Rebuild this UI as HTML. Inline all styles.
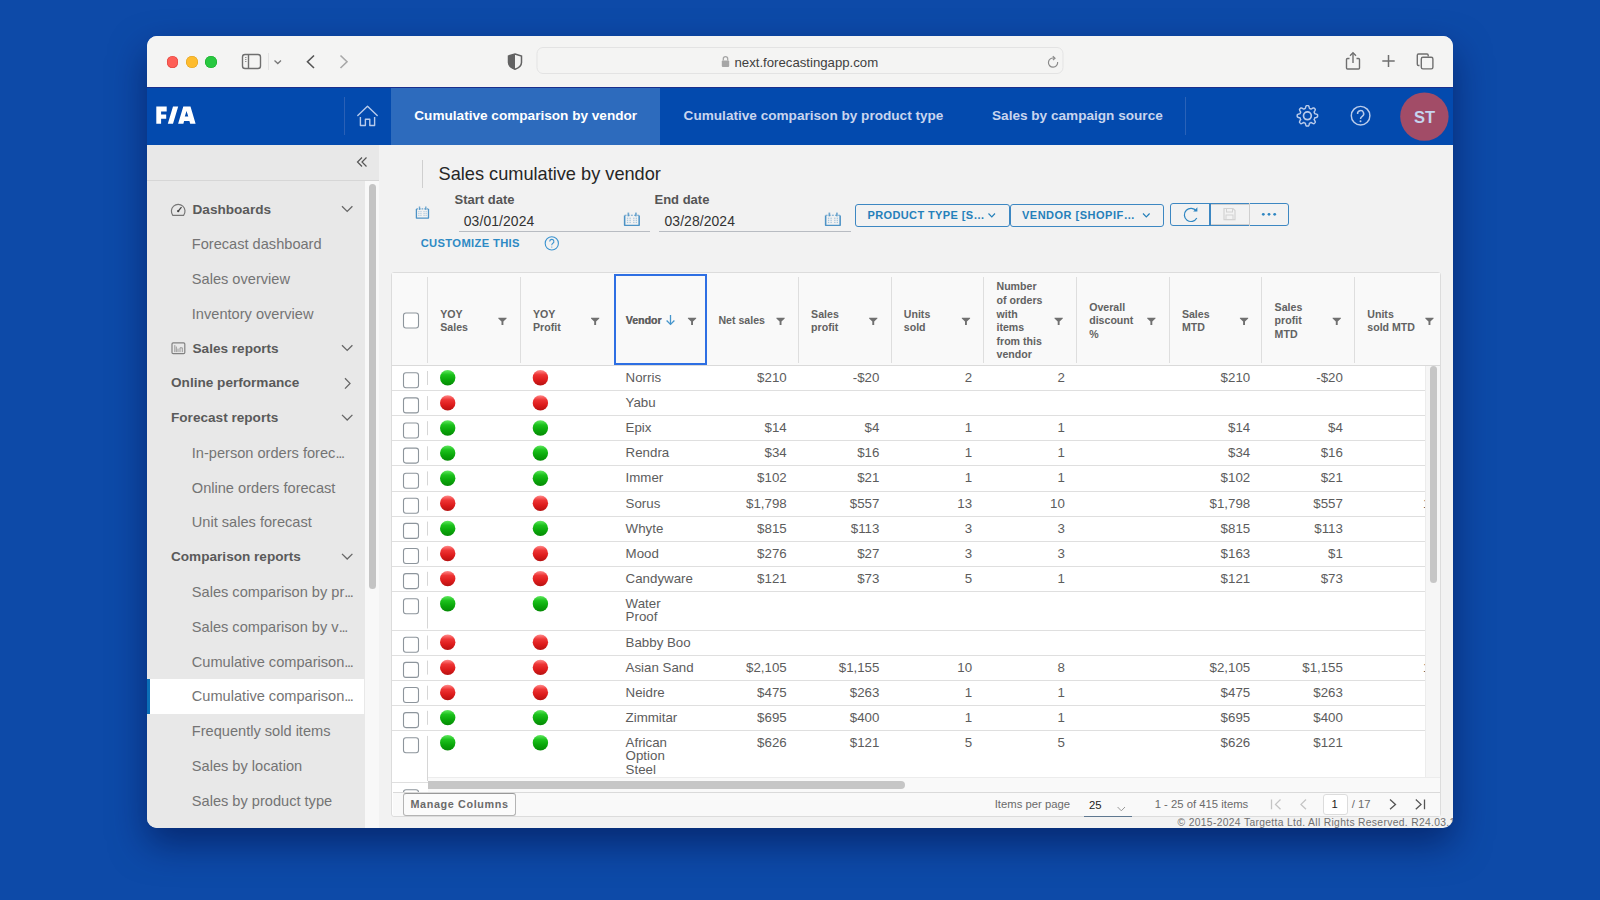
<!DOCTYPE html><html><head><meta charset="utf-8"><style>
*{box-sizing:border-box;margin:0;padding:0}
html,body{width:1600px;height:900px;overflow:hidden}
body{background:#0d4aa8;font-family:"Liberation Sans",sans-serif;position:relative}
#win{position:absolute;left:147px;top:36px;width:1306px;height:792px;border-radius:10px;overflow:hidden;box-shadow:0 16px 36px rgba(0,15,70,0.55);background:#f2f2f2}
#pg{position:absolute;left:-147px;top:-36px;width:1600px;height:900px}
.a{position:absolute}
.t{position:absolute;white-space:nowrap}
svg{position:absolute;overflow:visible}
</style></head><body>
<div id="win"><div id="pg">
<div class="a" style="left:147px;top:36px;width:1306px;height:51px;background:#f4f4f3"></div>
<div class="a" style="left:166.7px;top:56.0px;width:11.6px;height:11.6px;border-radius:50%;background:#fe5f57;box-shadow:inset 0 0 0 0.6px #e0443e"></div>
<div class="a" style="left:186.0px;top:56.0px;width:11.6px;height:11.6px;border-radius:50%;background:#febc2e;box-shadow:inset 0 0 0 0.6px #dea123"></div>
<div class="a" style="left:205.2px;top:56.0px;width:11.6px;height:11.6px;border-radius:50%;background:#28c840;box-shadow:inset 0 0 0 0.6px #1aab29"></div>
<svg style="left:0;top:0" width="1600" height="100"><rect x="242.5" y="54.5" width="18" height="14" rx="2.5" fill="none" stroke="#6f6f6f" stroke-width="1.4"/><line x1="248.5" y1="54.5" x2="248.5" y2="68.5" stroke="#6f6f6f" stroke-width="1.4"/><line x1="245" y1="57.5" x2="246.5" y2="57.5" stroke="#8a8a8a" stroke-width="0.9"/><line x1="245" y1="59.5" x2="246.5" y2="59.5" stroke="#8a8a8a" stroke-width="0.9"/><line x1="245" y1="61.5" x2="246.5" y2="61.5" stroke="#8a8a8a" stroke-width="0.9"/><line x1="268.5" y1="53" x2="268.5" y2="70" stroke="#e2e2e2" stroke-width="1"/><polyline points="274.5,60.5 277.8,63.5 281,60.5" fill="none" stroke="#777" stroke-width="1.3"/><polyline points="314,55.5 307.5,61.8 314,68" fill="none" stroke="#555" stroke-width="1.6"/><polyline points="340.5,55.5 347,61.8 340.5,68" fill="none" stroke="#a8a8a8" stroke-width="1.6"/><path d="M515,54 L521.5,56 L521.5,62.5 C521.5,66 518.5,68 515,69.3 C511.5,68 508.5,66 508.5,62.5 L508.5,56 Z" fill="none" stroke="#636363" stroke-width="1.5"/><path d="M515,54 L508.5,56 L508.5,62.5 C508.5,66 511.5,68 515,69.3 Z" fill="#636363"/><rect x="537" y="47.5" width="526" height="26" rx="6" fill="#f4f4f3" stroke="#e3e3e3" stroke-width="1"/><rect x="721.8" y="60.5" width="7.4" height="6.5" rx="1" fill="#a6a6a6"/><path d="M723.3,60.5 V58.8 A2.2,2.2 0 0 1 727.7,58.8 V60.5" fill="none" stroke="#a6a6a6" stroke-width="1.3"/><path d="M1057.6,62 A4.6,4.6 0 1 1 1054,58.1" fill="none" stroke="#8a8a8a" stroke-width="1.2"/><polyline points="1052.8,56.3 1055,58.2 1052.9,60.1" fill="none" stroke="#8a8a8a" stroke-width="1.2"/><path d="M1349.5,58.5 H1347.5 Q1346.5,58.5 1346.5,59.5 V68 Q1346.5,69 1347.5,69 H1358.5 Q1359.5,69 1359.5,68 V59.5 Q1359.5,58.5 1358.5,58.5 H1356.5" fill="none" stroke="#6f6f6f" stroke-width="1.4"/><line x1="1353" y1="53" x2="1353" y2="63" stroke="#6f6f6f" stroke-width="1.4"/><polyline points="1350,55.8 1353,52.8 1356,55.8" fill="none" stroke="#6f6f6f" stroke-width="1.4"/><line x1="1382.3" y1="61" x2="1394.7" y2="61" stroke="#6f6f6f" stroke-width="1.5"/><line x1="1388.5" y1="55" x2="1388.5" y2="67" stroke="#6f6f6f" stroke-width="1.5"/><path d="M1419.5,65.5 H1418.5 Q1417.3,65.5 1417.3,64.3 V55.2 Q1417.3,54 1418.5,54 H1427 Q1428.2,54 1428.2,55.2 V56.5" fill="none" stroke="#6f6f6f" stroke-width="1.4"/><rect x="1421.3" y="57.3" width="11.6" height="11.6" rx="1.6" fill="none" stroke="#6f6f6f" stroke-width="1.4"/></svg>
<div class="t" style="left:734.5px;top:54.5px;font-size:13.2px;line-height:16px;color:#404040">next.forecastingapp.com</div>
<div class="a" style="left:147px;top:87px;width:1306px;height:58px;background:#034aae"></div>
<div class="a" style="left:390.5px;top:87px;width:269.5px;height:58px;background:#2d6bbd"></div>
<div class="a" style="left:147px;top:87px;width:1306px;height:1px;background:#1a2f8c"></div>
<svg style="left:0;top:0" width="300" height="150"><path fill="#fff" fill-rule="evenodd" d="M156.3,106.5 H166.7 V111.4 H161.1 V114.5 H166.2 V118.7 H161.1 V123.8 H156.3 Z M173,106.5 H178.2 L173,123.8 H167.8 Z M183.3,106.5 L190.5,106.5 L195.6,123.8 L190.2,123.8 L189.4,121 L184.1,121 L183.4,123.8 L178.1,123.8 Z M186.5,111 L188.3,116.4 L184.8,116.4 Z"/></svg>
<div class="a" style="left:344.2px;top:96.5px;width:1px;height:38px;background:#2a60b6"></div>
<div class="a" style="left:1185px;top:96.5px;width:1px;height:38px;background:#2a62b8"></div>
<svg style="left:0;top:0" width="1600" height="150"><path d="M357.8,115.6 L367.5,106.3 L377.2,115.6" fill="none" stroke="#b9cbeb" stroke-width="1.4" stroke-linecap="round" stroke-linejoin="round"/><path d="M360.4,117 V125.5 H365.4 V119.2 H369.8 V125.5 H374.6 V117" fill="none" stroke="#b9cbeb" stroke-width="1.4" stroke-linejoin="round"/></svg>
<div class="t" style="left:414.3px;top:107px;font-size:13.6px;line-height:18px;font-weight:bold;color:#ffffff">Cumulative comparison by vendor</div>
<div class="t" style="left:683.6px;top:107px;font-size:13.6px;line-height:18px;font-weight:bold;color:#c8d5ee">Cumulative comparison by product type</div>
<div class="t" style="left:992px;top:107px;font-size:13.6px;line-height:18px;font-weight:bold;color:#c8d5ee">Sales by campaign source</div>
<svg style="left:0;top:0" width="1600" height="150"><path d="M1307.40,105.60 L1307.90,105.61 L1308.40,105.65 L1308.83,106.18 L1309.14,107.07 L1309.36,107.97 L1309.61,108.53 L1309.96,108.64 L1310.31,108.78 L1310.65,108.93 L1310.98,109.10 L1311.55,108.88 L1312.34,108.40 L1313.20,107.99 L1313.87,107.92 L1314.25,108.24 L1314.61,108.59 L1314.96,108.95 L1315.28,109.33 L1315.21,110.00 L1314.80,110.86 L1314.32,111.65 L1314.10,112.22 L1314.27,112.55 L1314.42,112.89 L1314.56,113.24 L1314.67,113.59 L1315.23,113.84 L1316.13,114.06 L1317.02,114.37 L1317.55,114.80 L1317.59,115.30 L1317.60,115.80 L1317.59,116.30 L1317.55,116.80 L1317.02,117.23 L1316.13,117.54 L1315.23,117.76 L1314.67,118.01 L1314.56,118.36 L1314.42,118.71 L1314.27,119.05 L1314.10,119.38 L1314.32,119.95 L1314.80,120.74 L1315.21,121.60 L1315.28,122.27 L1314.96,122.65 L1314.61,123.01 L1314.25,123.36 L1313.87,123.68 L1313.20,123.61 L1312.34,123.20 L1311.55,122.72 L1310.98,122.50 L1310.65,122.67 L1310.31,122.82 L1309.96,122.96 L1309.61,123.07 L1309.36,123.63 L1309.14,124.53 L1308.83,125.42 L1308.40,125.95 L1307.90,125.99 L1307.40,126.00 L1306.90,125.99 L1306.40,125.95 L1305.97,125.42 L1305.66,124.53 L1305.44,123.63 L1305.19,123.07 L1304.84,122.96 L1304.49,122.82 L1304.15,122.67 L1303.82,122.50 L1303.25,122.72 L1302.46,123.20 L1301.60,123.61 L1300.93,123.68 L1300.55,123.36 L1300.19,123.01 L1299.84,122.65 L1299.52,122.27 L1299.59,121.60 L1300.00,120.74 L1300.48,119.95 L1300.70,119.38 L1300.53,119.05 L1300.38,118.71 L1300.24,118.36 L1300.13,118.01 L1299.57,117.76 L1298.67,117.54 L1297.78,117.23 L1297.25,116.80 L1297.21,116.30 L1297.20,115.80 L1297.21,115.30 L1297.25,114.80 L1297.78,114.37 L1298.67,114.06 L1299.57,113.84 L1300.13,113.59 L1300.24,113.24 L1300.38,112.89 L1300.53,112.55 L1300.70,112.22 L1300.48,111.65 L1300.00,110.86 L1299.59,110.00 L1299.52,109.33 L1299.84,108.95 L1300.19,108.59 L1300.55,108.24 L1300.93,107.92 L1301.60,107.99 L1302.46,108.40 L1303.25,108.88 L1303.82,109.10 L1304.15,108.93 L1304.49,108.78 L1304.84,108.64 L1305.19,108.53 L1305.44,107.97 L1305.66,107.07 L1305.97,106.18 L1306.40,105.65 L1306.90,105.61 Z" fill="none" stroke="#b9cbeb" stroke-width="1.45" stroke-linejoin="round"/><circle cx="1307.4" cy="115.8" r="3.9" fill="none" stroke="#b9cbeb" stroke-width="1.7"/><circle cx="1360.6" cy="115.7" r="9.3" fill="none" stroke="#b9cbeb" stroke-width="1.45"/><path d="M1357.6,114 A3.05,3.05 0 1 1 1362.2,116.3 C1360.9,117.1 1360.5,117.6 1360.5,118.9" fill="none" stroke="#b9cbeb" stroke-width="1.5"/><circle cx="1360.5" cy="121.3" r="1" fill="#b9cbeb"/><circle cx="1424.4" cy="116.6" r="24.2" fill="#a24c67"/></svg>
<div class="t" style="left:1414px;top:106.5px;font-size:16.5px;line-height:20px;font-weight:bold;color:#c6d5ee">ST</div>
<div class="a" style="left:147px;top:145px;width:218px;height:683px;background:#e8e8e8"></div>
<div class="a" style="left:365px;top:145px;width:13.5px;height:683px;background:#f8f8f8"></div>
<div class="a" style="left:147px;top:145px;width:232px;height:35.5px;background:#e8e8e8;border-bottom:1.5px solid #d6d6d6"></div>
<svg style="left:0;top:0" width="400" height="200"><polyline points="362,157.5 357.5,162 362,166.5" fill="none" stroke="#555" stroke-width="1.2"/><polyline points="366.5,157.5 362,162 366.5,166.5" fill="none" stroke="#555" stroke-width="1.2"/></svg>
<div class="a" style="left:368.5px;top:184px;width:7.5px;height:405px;border-radius:4px;background:#c4c4c4"></div>
<div class="t" style="left:192.5px;top:200.6px;font-size:13.6px;line-height:18px;font-weight:bold;color:#5a5a5a">Dashboards</div>
<div class="t" style="left:191.8px;top:235.4px;font-size:14.6px;line-height:18px;color:#747474">Forecast dashboard</div>
<div class="t" style="left:191.8px;top:270.1px;font-size:14.6px;line-height:18px;color:#747474">Sales overview</div>
<div class="t" style="left:191.8px;top:304.9px;font-size:14.6px;line-height:18px;color:#747474">Inventory overview</div>
<div class="t" style="left:192.5px;top:339.6px;font-size:13.6px;line-height:18px;font-weight:bold;color:#5a5a5a">Sales reports</div>
<div class="t" style="left:171px;top:374.4px;font-size:13.6px;line-height:18px;font-weight:bold;color:#5a5a5a">Online performance</div>
<div class="t" style="left:171px;top:409.2px;font-size:13.6px;line-height:18px;font-weight:bold;color:#5a5a5a">Forecast reports</div>
<div class="t" style="left:191.8px;top:443.9px;font-size:14.6px;line-height:18px;color:#747474">In-person orders forec<span style="letter-spacing:-1.3px">...</span></div>
<div class="t" style="left:191.8px;top:478.7px;font-size:14.6px;line-height:18px;color:#747474">Online orders forecast</div>
<div class="t" style="left:191.8px;top:513.4px;font-size:14.6px;line-height:18px;color:#747474">Unit sales forecast</div>
<div class="t" style="left:171px;top:548.2px;font-size:13.6px;line-height:18px;font-weight:bold;color:#5a5a5a">Comparison reports</div>
<div class="t" style="left:191.8px;top:583.0px;font-size:14.6px;line-height:18px;color:#747474">Sales comparison by pr<span style="letter-spacing:-1.3px">...</span></div>
<div class="t" style="left:191.8px;top:617.7px;font-size:14.6px;line-height:18px;color:#747474">Sales comparison by v<span style="letter-spacing:-1.3px">...</span></div>
<div class="t" style="left:191.8px;top:652.5px;font-size:14.6px;line-height:18px;color:#747474">Cumulative comparison<span style="letter-spacing:-1.3px">...</span></div>
<div class="a" style="left:147px;top:679.0px;width:217px;height:34.5px;background:#fff"></div>
<div class="a" style="left:147px;top:679.0px;width:3px;height:34.5px;background:#0b6fb8"></div>
<div class="t" style="left:191.8px;top:687.2px;font-size:14.6px;line-height:18px;color:#747474">Cumulative comparison<span style="letter-spacing:-1.3px">...</span></div>
<div class="t" style="left:191.8px;top:722.0px;font-size:14.6px;line-height:18px;color:#747474">Frequently sold items</div>
<div class="t" style="left:191.8px;top:756.8px;font-size:14.6px;line-height:18px;color:#747474">Sales by location</div>
<div class="t" style="left:191.8px;top:791.5px;font-size:14.6px;line-height:18px;color:#747474">Sales by product type</div>
<svg style="left:0;top:0" width="400" height="900"><polyline points="342,206.3 347.2,211.4 352.4,206.3" fill="none" stroke="#666" stroke-width="1.3"/><path d="M172.8,215.3 A6.8,6.8 0 1 1 183.6,215.3 Z" fill="none" stroke="#777" stroke-width="1.2"/><line x1="178.2" y1="211.1" x2="181.5" y2="207.1" stroke="#444" stroke-width="1.3"/><circle cx="178.2" cy="211.1" r="1.2" fill="#444"/><polyline points="342,345.3 347.2,350.4 352.4,345.3" fill="none" stroke="#666" stroke-width="1.3"/><rect x="172" y="342.9" width="12.8" height="10.8" rx="1.2" fill="none" stroke="#808080" stroke-width="1.2"/><path d="M174.8,352.1 V345.1 M176.3,352.1 V346.6 M178,352.1 V348.6 M180,352.1 V347.8 H182.3 V352.1" fill="none" stroke="#909090" stroke-width="0.9"/><polyline points="345,378.2 350,383.4 345,388.6" fill="none" stroke="#666" stroke-width="1.3"/><polyline points="342,414.9 347.2,420.0 352.4,414.9" fill="none" stroke="#666" stroke-width="1.3"/><polyline points="342,553.9 347.2,559.0 352.4,553.9" fill="none" stroke="#666" stroke-width="1.3"/></svg>
<div class="a" style="left:421.5px;top:159.5px;width:1.2px;height:28px;background:#cfcfcf"></div>
<div class="t" style="left:438.5px;top:163px;font-size:18.2px;line-height:22px;color:#262626">Sales cumulative by vendor</div>
<div class="t" style="left:454.5px;top:192px;font-size:13px;line-height:15px;font-weight:bold;color:#555">Start date</div>
<div class="t" style="left:654.5px;top:192px;font-size:13px;line-height:15px;font-weight:bold;color:#555">End date</div>
<div class="t" style="left:463.8px;top:212.5px;font-size:13.9px;line-height:16px;color:#333;letter-spacing:0.1px">03/01/2024</div>
<div class="t" style="left:664.5px;top:212.5px;font-size:13.9px;line-height:16px;color:#333;letter-spacing:0.1px">03/28/2024</div>
<div class="a" style="left:458.5px;top:230.5px;width:191.5px;height:1.5px;background:#b8bcc2"></div>
<div class="a" style="left:659px;top:230.5px;width:192px;height:1.5px;background:#b8bcc2"></div>
<svg style="left:0;top:0" width="1600" height="300"><path d="M416.4,209.1 V218.1 H428.5 V209.1" fill="none" stroke="#4d93c6" stroke-width="1.3" stroke-linejoin="round"/><line x1="416.4" y1="208.9" x2="428.5" y2="208.9" stroke="#4d93c6" stroke-width="1.1" stroke-dasharray="1.6,1" opacity="0.8"/><rect x="418.8" y="206.5" width="1.4" height="3.4" fill="#4d93c6" opacity="0.8"/><rect x="425.1" y="206.5" width="1.4" height="3.4" fill="#4d93c6" opacity="0.8"/><rect x="418.3" y="211.1" width="1.1" height="1.1" fill="#4d93c6" opacity="0.45"/><rect x="420.4" y="211.1" width="1.1" height="1.1" fill="#4d93c6" opacity="0.45"/><rect x="423.5" y="211.1" width="1.1" height="1.1" fill="#4d93c6" opacity="0.45"/><rect x="425.6" y="211.1" width="1.1" height="1.1" fill="#4d93c6" opacity="0.45"/><rect x="418.3" y="213.0" width="1.1" height="1.1" fill="#4d93c6" opacity="0.45"/><rect x="420.4" y="213.0" width="1.1" height="1.1" fill="#4d93c6" opacity="0.45"/><rect x="423.5" y="213.0" width="1.1" height="1.1" fill="#4d93c6" opacity="0.45"/><rect x="425.6" y="213.0" width="1.1" height="1.1" fill="#4d93c6" opacity="0.45"/><rect x="418.3" y="214.9" width="1.1" height="1.1" fill="#4d93c6" opacity="0.45"/><rect x="420.4" y="214.9" width="1.1" height="1.1" fill="#4d93c6" opacity="0.45"/><rect x="423.5" y="214.9" width="1.1" height="1.1" fill="#4d93c6" opacity="0.45"/><rect x="425.6" y="214.9" width="1.1" height="1.1" fill="#4d93c6" opacity="0.45"/><g transform="translate(623.8,212.6) scale(1.2,1.1)"><path d="M0.7,2.6 V11.6 H12.8 V2.6" fill="none" stroke="#4d93c6" stroke-width="1.3" stroke-linejoin="round"/><line x1="0.7" y1="2.4" x2="12.8" y2="2.4" stroke="#4d93c6" stroke-width="1.1" stroke-dasharray="1.6,1" opacity="0.8"/><rect x="3.1" y="0.0" width="1.4" height="3.4" fill="#4d93c6" opacity="0.8"/><rect x="9.4" y="0.0" width="1.4" height="3.4" fill="#4d93c6" opacity="0.8"/><rect x="2.6" y="4.6" width="1.1" height="1.1" fill="#4d93c6" opacity="0.45"/><rect x="4.7" y="4.6" width="1.1" height="1.1" fill="#4d93c6" opacity="0.45"/><rect x="7.8" y="4.6" width="1.1" height="1.1" fill="#4d93c6" opacity="0.45"/><rect x="9.9" y="4.6" width="1.1" height="1.1" fill="#4d93c6" opacity="0.45"/><rect x="2.6" y="6.5" width="1.1" height="1.1" fill="#4d93c6" opacity="0.45"/><rect x="4.7" y="6.5" width="1.1" height="1.1" fill="#4d93c6" opacity="0.45"/><rect x="7.8" y="6.5" width="1.1" height="1.1" fill="#4d93c6" opacity="0.45"/><rect x="9.9" y="6.5" width="1.1" height="1.1" fill="#4d93c6" opacity="0.45"/><rect x="2.6" y="8.4" width="1.1" height="1.1" fill="#4d93c6" opacity="0.45"/><rect x="4.7" y="8.4" width="1.1" height="1.1" fill="#4d93c6" opacity="0.45"/><rect x="7.8" y="8.4" width="1.1" height="1.1" fill="#4d93c6" opacity="0.45"/><rect x="9.9" y="8.4" width="1.1" height="1.1" fill="#4d93c6" opacity="0.45"/></g><g transform="translate(824.8,212.6) scale(1.2,1.1)"><path d="M0.7,2.6 V11.6 H12.8 V2.6" fill="none" stroke="#4d93c6" stroke-width="1.3" stroke-linejoin="round"/><line x1="0.7" y1="2.4" x2="12.8" y2="2.4" stroke="#4d93c6" stroke-width="1.1" stroke-dasharray="1.6,1" opacity="0.8"/><rect x="3.1" y="0.0" width="1.4" height="3.4" fill="#4d93c6" opacity="0.8"/><rect x="9.4" y="0.0" width="1.4" height="3.4" fill="#4d93c6" opacity="0.8"/><rect x="2.6" y="4.6" width="1.1" height="1.1" fill="#4d93c6" opacity="0.45"/><rect x="4.7" y="4.6" width="1.1" height="1.1" fill="#4d93c6" opacity="0.45"/><rect x="7.8" y="4.6" width="1.1" height="1.1" fill="#4d93c6" opacity="0.45"/><rect x="9.9" y="4.6" width="1.1" height="1.1" fill="#4d93c6" opacity="0.45"/><rect x="2.6" y="6.5" width="1.1" height="1.1" fill="#4d93c6" opacity="0.45"/><rect x="4.7" y="6.5" width="1.1" height="1.1" fill="#4d93c6" opacity="0.45"/><rect x="7.8" y="6.5" width="1.1" height="1.1" fill="#4d93c6" opacity="0.45"/><rect x="9.9" y="6.5" width="1.1" height="1.1" fill="#4d93c6" opacity="0.45"/><rect x="2.6" y="8.4" width="1.1" height="1.1" fill="#4d93c6" opacity="0.45"/><rect x="4.7" y="8.4" width="1.1" height="1.1" fill="#4d93c6" opacity="0.45"/><rect x="7.8" y="8.4" width="1.1" height="1.1" fill="#4d93c6" opacity="0.45"/><rect x="9.9" y="8.4" width="1.1" height="1.1" fill="#4d93c6" opacity="0.45"/></g><circle cx="551.8" cy="243.4" r="6.6" fill="none" stroke="#3b93cf" stroke-width="1.1"/><path d="M549.7,241.4 A2.1,2.1 0 1 1 552.6,243.4 C551.9,243.9 551.8,244.3 551.8,245.2" fill="none" stroke="#3b93cf" stroke-width="1.1"/><circle cx="551.8" cy="247" r="0.6" fill="#3b93cf"/></svg>
<div class="t" style="left:420.7px;top:236.5px;font-size:11.2px;line-height:13px;font-weight:bold;color:#2e8ac4;letter-spacing:0.35px">CUSTOMIZE THIS</div>
<div class="a" style="left:855px;top:204px;width:154.5px;height:23px;border:1.3px solid #3d87c2;border-radius:3px"></div>
<div class="a" style="left:1009.5px;top:204px;width:154.5px;height:23px;border:1.3px solid #3d87c2;border-radius:3px"></div>
<div class="t" style="left:867.5px;top:209px;font-size:11px;line-height:13px;font-weight:bold;color:#2580ba;letter-spacing:0.38px">PRODUCT TYPE [S…</div>
<div class="t" style="left:1022px;top:209px;font-size:11px;line-height:13px;font-weight:bold;color:#2580ba;letter-spacing:0.5px">VENDOR [SHOPIF…</div>
<div class="a" style="left:1170px;top:203px;width:119px;height:22.8px;border:1.3px solid #3d87c2;border-radius:3px"></div>
<div class="a" style="left:1209.5px;top:203.6px;width:40px;height:21.6px;background:#f2f2f2;border-top:1.3px solid #cfcfcf;border-bottom:1.3px solid #cfcfcf"></div>
<div class="a" style="left:1209.3px;top:203px;width:1.3px;height:22.8px;background:#3d87c2"></div>
<div class="a" style="left:1248.8px;top:203px;width:1.3px;height:22.8px;background:#cfcfcf"></div>
<svg style="left:0;top:0" width="1600" height="300"><polyline points="988.5,213.5 991.8,216.8 995,213.5" fill="none" stroke="#2580ba" stroke-width="1.2"/><polyline points="1143,213.5 1146.3,216.8 1149.6,213.5" fill="none" stroke="#2580ba" stroke-width="1.2"/><path d="M1196.3,211 A6.6,6.6 0 1 0 1196.8,218" fill="none" stroke="#2e86c2" stroke-width="1.2"/><path d="M1197.4,207.3 V211.6 H1193.2 Z" fill="#2e86c2"/><path d="M1224,208.5 H1233 L1235,210.5 V219.6 H1224 Z" fill="none" stroke="#d2d2d2" stroke-width="1.2"/><rect x="1226.5" y="208.5" width="6" height="3.5" fill="none" stroke="#d2d2d2" stroke-width="1"/><rect x="1226" y="215" width="7" height="4.6" fill="none" stroke="#d2d2d2" stroke-width="1"/><circle cx="1263.3" cy="214.3" r="1.4" fill="#2e86c2"/><circle cx="1269" cy="214.3" r="1.4" fill="#2e86c2"/><circle cx="1274.7" cy="214.3" r="1.4" fill="#2e86c2"/></svg>
<div class="a" style="left:391px;top:272px;width:1050px;height:545px;background:#fff;border:1px solid #dcdcdc;border-radius:3px"></div>
<div class="a" style="left:392px;top:273px;width:1048px;height:93px;background:#f9f9f9;border-bottom:1px solid #dadada"></div>
<div class="a" style="left:427.0px;top:277px;width:1px;height:86px;background:#dedede"></div>
<div class="a" style="left:519.7px;top:277px;width:1px;height:86px;background:#dedede"></div>
<div class="a" style="left:797.8px;top:277px;width:1px;height:86px;background:#dedede"></div>
<div class="a" style="left:890.5px;top:277px;width:1px;height:86px;background:#dedede"></div>
<div class="a" style="left:983.2px;top:277px;width:1px;height:86px;background:#dedede"></div>
<div class="a" style="left:1075.9px;top:277px;width:1px;height:86px;background:#dedede"></div>
<div class="a" style="left:1168.6px;top:277px;width:1px;height:86px;background:#dedede"></div>
<div class="a" style="left:1261.3px;top:277px;width:1px;height:86px;background:#dedede"></div>
<div class="a" style="left:1354.0px;top:277px;width:1px;height:86px;background:#dedede"></div>
<div class="t" style="left:440.3px;top:307.6px;font-size:10.6px;line-height:13.6px;font-weight:bold;color:#626262">YOY</div>
<div class="t" style="left:440.3px;top:321.2px;font-size:10.6px;line-height:13.6px;font-weight:bold;color:#626262">Sales</div>
<div class="t" style="left:533.0px;top:307.6px;font-size:10.6px;line-height:13.6px;font-weight:bold;color:#626262">YOY</div>
<div class="t" style="left:533.0px;top:321.2px;font-size:10.6px;line-height:13.6px;font-weight:bold;color:#626262">Profit</div>
<div class="t" style="left:625.7px;top:314.4px;font-size:10.6px;line-height:13.6px;font-weight:bold;color:#626262">Vendor</div>
<div class="t" style="left:718.4px;top:314.4px;font-size:10.6px;line-height:13.6px;font-weight:bold;color:#626262">Net sales</div>
<div class="t" style="left:811.1px;top:307.6px;font-size:10.6px;line-height:13.6px;font-weight:bold;color:#626262">Sales</div>
<div class="t" style="left:811.1px;top:321.2px;font-size:10.6px;line-height:13.6px;font-weight:bold;color:#626262">profit</div>
<div class="t" style="left:903.8px;top:307.6px;font-size:10.6px;line-height:13.6px;font-weight:bold;color:#626262">Units</div>
<div class="t" style="left:903.8px;top:321.2px;font-size:10.6px;line-height:13.6px;font-weight:bold;color:#626262">sold</div>
<div class="t" style="left:996.5px;top:280.4px;font-size:10.6px;line-height:13.6px;font-weight:bold;color:#626262">Number</div>
<div class="t" style="left:996.5px;top:294.0px;font-size:10.6px;line-height:13.6px;font-weight:bold;color:#626262">of orders</div>
<div class="t" style="left:996.5px;top:307.6px;font-size:10.6px;line-height:13.6px;font-weight:bold;color:#626262">with</div>
<div class="t" style="left:996.5px;top:321.2px;font-size:10.6px;line-height:13.6px;font-weight:bold;color:#626262">items</div>
<div class="t" style="left:996.5px;top:334.8px;font-size:10.6px;line-height:13.6px;font-weight:bold;color:#626262">from this</div>
<div class="t" style="left:996.5px;top:348.4px;font-size:10.6px;line-height:13.6px;font-weight:bold;color:#626262">vendor</div>
<div class="t" style="left:1089.2px;top:300.8px;font-size:10.6px;line-height:13.6px;font-weight:bold;color:#626262">Overall</div>
<div class="t" style="left:1089.2px;top:314.4px;font-size:10.6px;line-height:13.6px;font-weight:bold;color:#626262">discount</div>
<div class="t" style="left:1089.2px;top:328.0px;font-size:10.6px;line-height:13.6px;font-weight:bold;color:#626262">%</div>
<div class="t" style="left:1181.9px;top:307.6px;font-size:10.6px;line-height:13.6px;font-weight:bold;color:#626262">Sales</div>
<div class="t" style="left:1181.9px;top:321.2px;font-size:10.6px;line-height:13.6px;font-weight:bold;color:#626262">MTD</div>
<div class="t" style="left:1274.6px;top:300.8px;font-size:10.6px;line-height:13.6px;font-weight:bold;color:#626262">Sales</div>
<div class="t" style="left:1274.6px;top:314.4px;font-size:10.6px;line-height:13.6px;font-weight:bold;color:#626262">profit</div>
<div class="t" style="left:1274.6px;top:328.0px;font-size:10.6px;line-height:13.6px;font-weight:bold;color:#626262">MTD</div>
<div class="t" style="left:1367.3px;top:307.6px;font-size:10.6px;line-height:13.6px;font-weight:bold;color:#626262">Units</div>
<div class="t" style="left:1367.3px;top:321.2px;font-size:10.6px;line-height:13.6px;font-weight:bold;color:#626262">sold MTD</div>
<svg style="left:0;top:0" width="1600" height="900"><path d="M498.3,317.8 H506.6 V318.6 L503.4,321.6 V325.1 H501.5 V321.6 L498.3,318.6 Z" fill="#707070"/><path d="M591.0,317.8 H599.3 V318.6 L596.1,321.6 V325.1 H594.2 V321.6 L591.0,318.6 Z" fill="#707070"/><path d="M687.9,317.8 H696.2 V318.6 L693.0,321.6 V325.1 H691.1 V321.6 L687.9,318.6 Z" fill="#707070"/><path d="M776.4,317.8 H784.7 V318.6 L781.5,321.6 V325.1 H779.6 V321.6 L776.4,318.6 Z" fill="#707070"/><path d="M869.1,317.8 H877.4 V318.6 L874.2,321.6 V325.1 H872.3 V321.6 L869.1,318.6 Z" fill="#707070"/><path d="M961.8,317.8 H970.1 V318.6 L966.9,321.6 V325.1 H965.0 V321.6 L961.8,318.6 Z" fill="#707070"/><path d="M1054.5,317.8 H1062.8 V318.6 L1059.6,321.6 V325.1 H1057.7 V321.6 L1054.5,318.6 Z" fill="#707070"/><path d="M1147.2,317.8 H1155.5 V318.6 L1152.3,321.6 V325.1 H1150.4 V321.6 L1147.2,318.6 Z" fill="#707070"/><path d="M1239.9,317.8 H1248.2 V318.6 L1245.0,321.6 V325.1 H1243.1 V321.6 L1239.9,318.6 Z" fill="#707070"/><path d="M1332.6,317.8 H1340.9 V318.6 L1337.7,321.6 V325.1 H1335.8 V321.6 L1332.6,318.6 Z" fill="#707070"/><path d="M1425.3,317.8 H1433.6 V318.6 L1430.4,321.6 V325.1 H1428.5 V321.6 L1425.3,318.6 Z" fill="#707070"/><line x1="670.5" y1="315" x2="670.5" y2="324.3" stroke="#4696cc" stroke-width="1.3"/><polyline points="666.6,320.5 670.5,324.4 674.4,320.5" fill="none" stroke="#4696cc" stroke-width="1.3"/><rect x="403.5" y="313" width="15" height="15" rx="2.5" fill="#fff" stroke="#8d959c" stroke-width="1.1"/></svg>
<div class="a" style="left:613.5px;top:273.5px;width:93px;height:91.5px;border:2px solid #2e6fe3"></div>
<div class="t" style="left:625.8px;top:314px;font-size:10.6px;line-height:13.6px;font-weight:bold;color:#626262">Vendor</div>
<div class="a" style="left:392px;top:365.5px;width:1033.5px;height:426.5px;overflow:hidden">
<div class="a" style="left:-392px;top:-365.5px;width:1600px;height:900px">
<div class="a" style="left:392px;top:390.1px;width:1034px;height:1px;background:#dfdfdf"></div>
<div class="t" style="left:625.6px;top:371.0px;font-size:13.3px;line-height:13.5px;color:#5c5c5c">Norris</div>
<div class="t" style="right:813.3px;top:371.0px;font-size:13.3px;line-height:13.5px;color:#5c5c5c;text-align:right">$210</div>
<div class="t" style="right:720.6px;top:371.0px;font-size:13.3px;line-height:13.5px;color:#5c5c5c;text-align:right">-$20</div>
<div class="t" style="right:627.9px;top:371.0px;font-size:13.3px;line-height:13.5px;color:#5c5c5c;text-align:right">2</div>
<div class="t" style="right:535.2px;top:371.0px;font-size:13.3px;line-height:13.5px;color:#5c5c5c;text-align:right">2</div>
<div class="t" style="right:349.8px;top:371.0px;font-size:13.3px;line-height:13.5px;color:#5c5c5c;text-align:right">$210</div>
<div class="t" style="right:257.1px;top:371.0px;font-size:13.3px;line-height:13.5px;color:#5c5c5c;text-align:right">-$20</div>
<div class="a" style="left:392px;top:415.2px;width:1034px;height:1px;background:#dfdfdf"></div>
<div class="t" style="left:625.6px;top:396.1px;font-size:13.3px;line-height:13.5px;color:#5c5c5c">Yabu</div>
<div class="a" style="left:392px;top:440.3px;width:1034px;height:1px;background:#dfdfdf"></div>
<div class="t" style="left:625.6px;top:421.2px;font-size:13.3px;line-height:13.5px;color:#5c5c5c">Epix</div>
<div class="t" style="right:813.3px;top:421.2px;font-size:13.3px;line-height:13.5px;color:#5c5c5c;text-align:right">$14</div>
<div class="t" style="right:720.6px;top:421.2px;font-size:13.3px;line-height:13.5px;color:#5c5c5c;text-align:right">$4</div>
<div class="t" style="right:627.9px;top:421.2px;font-size:13.3px;line-height:13.5px;color:#5c5c5c;text-align:right">1</div>
<div class="t" style="right:535.2px;top:421.2px;font-size:13.3px;line-height:13.5px;color:#5c5c5c;text-align:right">1</div>
<div class="t" style="right:349.8px;top:421.2px;font-size:13.3px;line-height:13.5px;color:#5c5c5c;text-align:right">$14</div>
<div class="t" style="right:257.1px;top:421.2px;font-size:13.3px;line-height:13.5px;color:#5c5c5c;text-align:right">$4</div>
<div class="a" style="left:392px;top:465.4px;width:1034px;height:1px;background:#dfdfdf"></div>
<div class="t" style="left:625.6px;top:446.3px;font-size:13.3px;line-height:13.5px;color:#5c5c5c">Rendra</div>
<div class="t" style="right:813.3px;top:446.3px;font-size:13.3px;line-height:13.5px;color:#5c5c5c;text-align:right">$34</div>
<div class="t" style="right:720.6px;top:446.3px;font-size:13.3px;line-height:13.5px;color:#5c5c5c;text-align:right">$16</div>
<div class="t" style="right:627.9px;top:446.3px;font-size:13.3px;line-height:13.5px;color:#5c5c5c;text-align:right">1</div>
<div class="t" style="right:535.2px;top:446.3px;font-size:13.3px;line-height:13.5px;color:#5c5c5c;text-align:right">1</div>
<div class="t" style="right:349.8px;top:446.3px;font-size:13.3px;line-height:13.5px;color:#5c5c5c;text-align:right">$34</div>
<div class="t" style="right:257.1px;top:446.3px;font-size:13.3px;line-height:13.5px;color:#5c5c5c;text-align:right">$16</div>
<div class="a" style="left:392px;top:490.5px;width:1034px;height:1px;background:#dfdfdf"></div>
<div class="t" style="left:625.6px;top:471.4px;font-size:13.3px;line-height:13.5px;color:#5c5c5c">Immer</div>
<div class="t" style="right:813.3px;top:471.4px;font-size:13.3px;line-height:13.5px;color:#5c5c5c;text-align:right">$102</div>
<div class="t" style="right:720.6px;top:471.4px;font-size:13.3px;line-height:13.5px;color:#5c5c5c;text-align:right">$21</div>
<div class="t" style="right:627.9px;top:471.4px;font-size:13.3px;line-height:13.5px;color:#5c5c5c;text-align:right">1</div>
<div class="t" style="right:535.2px;top:471.4px;font-size:13.3px;line-height:13.5px;color:#5c5c5c;text-align:right">1</div>
<div class="t" style="right:349.8px;top:471.4px;font-size:13.3px;line-height:13.5px;color:#5c5c5c;text-align:right">$102</div>
<div class="t" style="right:257.1px;top:471.4px;font-size:13.3px;line-height:13.5px;color:#5c5c5c;text-align:right">$21</div>
<div class="a" style="left:392px;top:515.6px;width:1034px;height:1px;background:#dfdfdf"></div>
<div class="t" style="left:625.6px;top:496.5px;font-size:13.3px;line-height:13.5px;color:#5c5c5c">Sorus</div>
<div class="t" style="right:813.3px;top:496.5px;font-size:13.3px;line-height:13.5px;color:#5c5c5c;text-align:right">$1,798</div>
<div class="t" style="right:720.6px;top:496.5px;font-size:13.3px;line-height:13.5px;color:#5c5c5c;text-align:right">$557</div>
<div class="t" style="right:627.9px;top:496.5px;font-size:13.3px;line-height:13.5px;color:#5c5c5c;text-align:right">13</div>
<div class="t" style="right:535.2px;top:496.5px;font-size:13.3px;line-height:13.5px;color:#5c5c5c;text-align:right">10</div>
<div class="t" style="right:349.8px;top:496.5px;font-size:13.3px;line-height:13.5px;color:#5c5c5c;text-align:right">$1,798</div>
<div class="t" style="right:257.1px;top:496.5px;font-size:13.3px;line-height:13.5px;color:#5c5c5c;text-align:right">$557</div>
<div class="t" style="left:1423px;top:496.5px;font-size:13.3px;line-height:13.5px;color:#5c5c5c">1</div>
<div class="a" style="left:392px;top:540.7px;width:1034px;height:1px;background:#dfdfdf"></div>
<div class="t" style="left:625.6px;top:521.6px;font-size:13.3px;line-height:13.5px;color:#5c5c5c">Whyte</div>
<div class="t" style="right:813.3px;top:521.6px;font-size:13.3px;line-height:13.5px;color:#5c5c5c;text-align:right">$815</div>
<div class="t" style="right:720.6px;top:521.6px;font-size:13.3px;line-height:13.5px;color:#5c5c5c;text-align:right">$113</div>
<div class="t" style="right:627.9px;top:521.6px;font-size:13.3px;line-height:13.5px;color:#5c5c5c;text-align:right">3</div>
<div class="t" style="right:535.2px;top:521.6px;font-size:13.3px;line-height:13.5px;color:#5c5c5c;text-align:right">3</div>
<div class="t" style="right:349.8px;top:521.6px;font-size:13.3px;line-height:13.5px;color:#5c5c5c;text-align:right">$815</div>
<div class="t" style="right:257.1px;top:521.6px;font-size:13.3px;line-height:13.5px;color:#5c5c5c;text-align:right">$113</div>
<div class="a" style="left:392px;top:565.8px;width:1034px;height:1px;background:#dfdfdf"></div>
<div class="t" style="left:625.6px;top:546.7px;font-size:13.3px;line-height:13.5px;color:#5c5c5c">Mood</div>
<div class="t" style="right:813.3px;top:546.7px;font-size:13.3px;line-height:13.5px;color:#5c5c5c;text-align:right">$276</div>
<div class="t" style="right:720.6px;top:546.7px;font-size:13.3px;line-height:13.5px;color:#5c5c5c;text-align:right">$27</div>
<div class="t" style="right:627.9px;top:546.7px;font-size:13.3px;line-height:13.5px;color:#5c5c5c;text-align:right">3</div>
<div class="t" style="right:535.2px;top:546.7px;font-size:13.3px;line-height:13.5px;color:#5c5c5c;text-align:right">3</div>
<div class="t" style="right:349.8px;top:546.7px;font-size:13.3px;line-height:13.5px;color:#5c5c5c;text-align:right">$163</div>
<div class="t" style="right:257.1px;top:546.7px;font-size:13.3px;line-height:13.5px;color:#5c5c5c;text-align:right">$1</div>
<div class="a" style="left:392px;top:590.9px;width:1034px;height:1px;background:#dfdfdf"></div>
<div class="t" style="left:625.6px;top:571.8px;font-size:13.3px;line-height:13.5px;color:#5c5c5c">Candyware</div>
<div class="t" style="right:813.3px;top:571.8px;font-size:13.3px;line-height:13.5px;color:#5c5c5c;text-align:right">$121</div>
<div class="t" style="right:720.6px;top:571.8px;font-size:13.3px;line-height:13.5px;color:#5c5c5c;text-align:right">$73</div>
<div class="t" style="right:627.9px;top:571.8px;font-size:13.3px;line-height:13.5px;color:#5c5c5c;text-align:right">5</div>
<div class="t" style="right:535.2px;top:571.8px;font-size:13.3px;line-height:13.5px;color:#5c5c5c;text-align:right">1</div>
<div class="t" style="right:349.8px;top:571.8px;font-size:13.3px;line-height:13.5px;color:#5c5c5c;text-align:right">$121</div>
<div class="t" style="right:257.1px;top:571.8px;font-size:13.3px;line-height:13.5px;color:#5c5c5c;text-align:right">$73</div>
<div class="a" style="left:392px;top:629.5px;width:1034px;height:1px;background:#dfdfdf"></div>
<div class="t" style="left:625.6px;top:596.9px;font-size:13.3px;line-height:13.5px;color:#5c5c5c">Water<br>Proof</div>
<div class="a" style="left:392px;top:654.6px;width:1034px;height:1px;background:#dfdfdf"></div>
<div class="t" style="left:625.6px;top:635.5px;font-size:13.3px;line-height:13.5px;color:#5c5c5c">Babby Boo</div>
<div class="a" style="left:392px;top:679.7px;width:1034px;height:1px;background:#dfdfdf"></div>
<div class="t" style="left:625.6px;top:660.6px;font-size:13.3px;line-height:13.5px;color:#5c5c5c">Asian Sand</div>
<div class="t" style="right:813.3px;top:660.6px;font-size:13.3px;line-height:13.5px;color:#5c5c5c;text-align:right">$2,105</div>
<div class="t" style="right:720.6px;top:660.6px;font-size:13.3px;line-height:13.5px;color:#5c5c5c;text-align:right">$1,155</div>
<div class="t" style="right:627.9px;top:660.6px;font-size:13.3px;line-height:13.5px;color:#5c5c5c;text-align:right">10</div>
<div class="t" style="right:535.2px;top:660.6px;font-size:13.3px;line-height:13.5px;color:#5c5c5c;text-align:right">8</div>
<div class="t" style="right:349.8px;top:660.6px;font-size:13.3px;line-height:13.5px;color:#5c5c5c;text-align:right">$2,105</div>
<div class="t" style="right:257.1px;top:660.6px;font-size:13.3px;line-height:13.5px;color:#5c5c5c;text-align:right">$1,155</div>
<div class="t" style="left:1423px;top:660.6px;font-size:13.3px;line-height:13.5px;color:#5c5c5c">1</div>
<div class="a" style="left:392px;top:704.8px;width:1034px;height:1px;background:#dfdfdf"></div>
<div class="t" style="left:625.6px;top:685.7px;font-size:13.3px;line-height:13.5px;color:#5c5c5c">Neidre</div>
<div class="t" style="right:813.3px;top:685.7px;font-size:13.3px;line-height:13.5px;color:#5c5c5c;text-align:right">$475</div>
<div class="t" style="right:720.6px;top:685.7px;font-size:13.3px;line-height:13.5px;color:#5c5c5c;text-align:right">$263</div>
<div class="t" style="right:627.9px;top:685.7px;font-size:13.3px;line-height:13.5px;color:#5c5c5c;text-align:right">1</div>
<div class="t" style="right:535.2px;top:685.7px;font-size:13.3px;line-height:13.5px;color:#5c5c5c;text-align:right">1</div>
<div class="t" style="right:349.8px;top:685.7px;font-size:13.3px;line-height:13.5px;color:#5c5c5c;text-align:right">$475</div>
<div class="t" style="right:257.1px;top:685.7px;font-size:13.3px;line-height:13.5px;color:#5c5c5c;text-align:right">$263</div>
<div class="a" style="left:392px;top:729.9px;width:1034px;height:1px;background:#dfdfdf"></div>
<div class="t" style="left:625.6px;top:710.8px;font-size:13.3px;line-height:13.5px;color:#5c5c5c">Zimmitar</div>
<div class="t" style="right:813.3px;top:710.8px;font-size:13.3px;line-height:13.5px;color:#5c5c5c;text-align:right">$695</div>
<div class="t" style="right:720.6px;top:710.8px;font-size:13.3px;line-height:13.5px;color:#5c5c5c;text-align:right">$400</div>
<div class="t" style="right:627.9px;top:710.8px;font-size:13.3px;line-height:13.5px;color:#5c5c5c;text-align:right">1</div>
<div class="t" style="right:535.2px;top:710.8px;font-size:13.3px;line-height:13.5px;color:#5c5c5c;text-align:right">1</div>
<div class="t" style="right:349.8px;top:710.8px;font-size:13.3px;line-height:13.5px;color:#5c5c5c;text-align:right">$695</div>
<div class="t" style="right:257.1px;top:710.8px;font-size:13.3px;line-height:13.5px;color:#5c5c5c;text-align:right">$400</div>
<div class="a" style="left:392px;top:782.0px;width:1034px;height:1px;background:#dfdfdf"></div>
<div class="t" style="left:625.6px;top:735.9px;font-size:13.3px;line-height:13.5px;color:#5c5c5c">African<br>Option<br>Steel</div>
<div class="t" style="right:813.3px;top:735.9px;font-size:13.3px;line-height:13.5px;color:#5c5c5c;text-align:right">$626</div>
<div class="t" style="right:720.6px;top:735.9px;font-size:13.3px;line-height:13.5px;color:#5c5c5c;text-align:right">$121</div>
<div class="t" style="right:627.9px;top:735.9px;font-size:13.3px;line-height:13.5px;color:#5c5c5c;text-align:right">5</div>
<div class="t" style="right:535.2px;top:735.9px;font-size:13.3px;line-height:13.5px;color:#5c5c5c;text-align:right">5</div>
<div class="t" style="right:349.8px;top:735.9px;font-size:13.3px;line-height:13.5px;color:#5c5c5c;text-align:right">$626</div>
<div class="t" style="right:257.1px;top:735.9px;font-size:13.3px;line-height:13.5px;color:#5c5c5c;text-align:right">$121</div>
<svg style="left:0;top:0" width="1600" height="900"><defs><linearGradient id="gg" x1="0" y1="0" x2="0" y2="1"><stop offset="0" stop-color="#62e862"/><stop offset="0.3" stop-color="#1cc21c"/><stop offset="0.65" stop-color="#0aa60a"/><stop offset="1" stop-color="#068a06"/></linearGradient><linearGradient id="rg" x1="0" y1="0" x2="0" y2="1"><stop offset="0" stop-color="#ff8a8a"/><stop offset="0.3" stop-color="#ee3434"/><stop offset="0.65" stop-color="#dc1b1b"/><stop offset="1" stop-color="#b51212"/></linearGradient></defs><rect x="403.5" y="372.8" width="15" height="15" rx="2.5" fill="#fff" stroke="#8d959c" stroke-width="1.1"/><line x1="427.5" y1="371.0" x2="427.5" y2="385.0" stroke="#d6d6d6" stroke-width="1"/><circle cx="447.7" cy="377.8" r="7.7" fill="url(#gg)"/><circle cx="540.4" cy="377.8" r="7.7" fill="url(#rg)"/><rect x="403.5" y="397.9" width="15" height="15" rx="2.5" fill="#fff" stroke="#8d959c" stroke-width="1.1"/><line x1="427.5" y1="396.1" x2="427.5" y2="410.1" stroke="#d6d6d6" stroke-width="1"/><circle cx="447.7" cy="402.9" r="7.7" fill="url(#rg)"/><circle cx="540.4" cy="402.9" r="7.7" fill="url(#rg)"/><rect x="403.5" y="423.0" width="15" height="15" rx="2.5" fill="#fff" stroke="#8d959c" stroke-width="1.1"/><line x1="427.5" y1="421.2" x2="427.5" y2="435.2" stroke="#d6d6d6" stroke-width="1"/><circle cx="447.7" cy="428.0" r="7.7" fill="url(#gg)"/><circle cx="540.4" cy="428.0" r="7.7" fill="url(#gg)"/><rect x="403.5" y="448.1" width="15" height="15" rx="2.5" fill="#fff" stroke="#8d959c" stroke-width="1.1"/><line x1="427.5" y1="446.3" x2="427.5" y2="460.3" stroke="#d6d6d6" stroke-width="1"/><circle cx="447.7" cy="453.1" r="7.7" fill="url(#gg)"/><circle cx="540.4" cy="453.1" r="7.7" fill="url(#gg)"/><rect x="403.5" y="473.2" width="15" height="15" rx="2.5" fill="#fff" stroke="#8d959c" stroke-width="1.1"/><line x1="427.5" y1="471.4" x2="427.5" y2="485.4" stroke="#d6d6d6" stroke-width="1"/><circle cx="447.7" cy="478.2" r="7.7" fill="url(#gg)"/><circle cx="540.4" cy="478.2" r="7.7" fill="url(#gg)"/><rect x="403.5" y="498.3" width="15" height="15" rx="2.5" fill="#fff" stroke="#8d959c" stroke-width="1.1"/><line x1="427.5" y1="496.5" x2="427.5" y2="510.5" stroke="#d6d6d6" stroke-width="1"/><circle cx="447.7" cy="503.3" r="7.7" fill="url(#rg)"/><circle cx="540.4" cy="503.3" r="7.7" fill="url(#rg)"/><rect x="403.5" y="523.4" width="15" height="15" rx="2.5" fill="#fff" stroke="#8d959c" stroke-width="1.1"/><line x1="427.5" y1="521.6" x2="427.5" y2="535.6" stroke="#d6d6d6" stroke-width="1"/><circle cx="447.7" cy="528.4" r="7.7" fill="url(#gg)"/><circle cx="540.4" cy="528.4" r="7.7" fill="url(#gg)"/><rect x="403.5" y="548.5" width="15" height="15" rx="2.5" fill="#fff" stroke="#8d959c" stroke-width="1.1"/><line x1="427.5" y1="546.7" x2="427.5" y2="560.7" stroke="#d6d6d6" stroke-width="1"/><circle cx="447.7" cy="553.5" r="7.7" fill="url(#rg)"/><circle cx="540.4" cy="553.5" r="7.7" fill="url(#rg)"/><rect x="403.5" y="573.6" width="15" height="15" rx="2.5" fill="#fff" stroke="#8d959c" stroke-width="1.1"/><line x1="427.5" y1="571.8" x2="427.5" y2="585.8" stroke="#d6d6d6" stroke-width="1"/><circle cx="447.7" cy="578.6" r="7.7" fill="url(#rg)"/><circle cx="540.4" cy="578.6" r="7.7" fill="url(#rg)"/><rect x="403.5" y="598.7" width="15" height="15" rx="2.5" fill="#fff" stroke="#8d959c" stroke-width="1.1"/><line x1="427.5" y1="596.9" x2="427.5" y2="628.5" stroke="#d6d6d6" stroke-width="1"/><circle cx="447.7" cy="603.7" r="7.7" fill="url(#gg)"/><circle cx="540.4" cy="603.7" r="7.7" fill="url(#gg)"/><rect x="403.5" y="637.3" width="15" height="15" rx="2.5" fill="#fff" stroke="#8d959c" stroke-width="1.1"/><line x1="427.5" y1="635.5" x2="427.5" y2="649.5" stroke="#d6d6d6" stroke-width="1"/><circle cx="447.7" cy="642.3" r="7.7" fill="url(#rg)"/><circle cx="540.4" cy="642.3" r="7.7" fill="url(#rg)"/><rect x="403.5" y="662.4" width="15" height="15" rx="2.5" fill="#fff" stroke="#8d959c" stroke-width="1.1"/><line x1="427.5" y1="660.6" x2="427.5" y2="674.6" stroke="#d6d6d6" stroke-width="1"/><circle cx="447.7" cy="667.4" r="7.7" fill="url(#rg)"/><circle cx="540.4" cy="667.4" r="7.7" fill="url(#rg)"/><rect x="403.5" y="687.5" width="15" height="15" rx="2.5" fill="#fff" stroke="#8d959c" stroke-width="1.1"/><line x1="427.5" y1="685.7" x2="427.5" y2="699.7" stroke="#d6d6d6" stroke-width="1"/><circle cx="447.7" cy="692.5" r="7.7" fill="url(#rg)"/><circle cx="540.4" cy="692.5" r="7.7" fill="url(#rg)"/><rect x="403.5" y="712.6" width="15" height="15" rx="2.5" fill="#fff" stroke="#8d959c" stroke-width="1.1"/><line x1="427.5" y1="710.8" x2="427.5" y2="724.8" stroke="#d6d6d6" stroke-width="1"/><circle cx="447.7" cy="717.6" r="7.7" fill="url(#gg)"/><circle cx="540.4" cy="717.6" r="7.7" fill="url(#gg)"/><rect x="403.5" y="737.7" width="15" height="15" rx="2.5" fill="#fff" stroke="#8d959c" stroke-width="1.1"/><line x1="427.5" y1="735.9" x2="427.5" y2="781.0" stroke="#d6d6d6" stroke-width="1"/><circle cx="447.7" cy="742.7" r="7.7" fill="url(#gg)"/><circle cx="540.4" cy="742.7" r="7.7" fill="url(#gg)"/><rect x="403.5" y="789.8" width="15" height="15" rx="2.5" fill="#fff" stroke="#8d959c" stroke-width="1.1"/></svg>
</div></div>
<div class="a" style="left:1425.3px;top:365.5px;width:14.7px;height:426.5px;background:#f6f6f6;border-left:1px solid #ececec"></div>
<div class="a" style="left:1429.5px;top:366px;width:7.3px;height:217px;border-radius:4px;background:#c6c6c6"></div>
<div class="a" style="left:428px;top:777px;width:1012px;height:15px;background:#f9f9f9;border-top:1px solid #ececec"></div>
<div class="a" style="left:428px;top:781.2px;width:477px;height:7.5px;border-radius:0 4px 4px 0;background:#c6c6c6"></div>
<div class="a" style="left:392.5px;top:791.5px;width:1047px;height:24.5px;background:#f9f9f9;border-top:1px solid #dadada"></div>
<div class="a" style="left:403px;top:793.3px;width:113px;height:22.6px;background:#fbfbfb;border:1px solid #b4b4b4;border-top:1.5px solid #999;border-radius:3px"></div>
<div class="t" style="left:410.5px;top:798px;font-size:10.8px;line-height:13px;font-weight:bold;color:#6a6a6a;letter-spacing:0.62px">Manage Columns</div>
<div class="t" style="left:994.7px;top:798px;font-size:11.3px;line-height:13px;color:#6a6a6a">Items per page</div>
<div class="t" style="left:1089px;top:798.5px;font-size:11.3px;line-height:13px;color:#222">25</div>
<div class="a" style="left:1083.5px;top:815.5px;width:48px;height:1.2px;background:#5f7890"></div>
<div class="t" style="left:1154.7px;top:798px;font-size:11.3px;line-height:13px;color:#6a6a6a">1 - 25 of 415 items</div>
<div class="a" style="left:1322.6px;top:793.9px;width:25.2px;height:21px;background:#fff;border:1px solid #dcdcdc;border-radius:3px"></div>
<div class="t" style="left:1331.5px;top:798px;font-size:11.3px;line-height:13px;color:#222">1</div>
<div class="t" style="left:1351.7px;top:798px;font-size:11.3px;line-height:13px;color:#6a6a6a">/ 17</div>
<div class="t" style="left:1177.6px;top:817px;font-size:10.3px;line-height:12px;color:#6f6f6f;letter-spacing:0.33px">© 2015-2024 Targetta Ltd. All Rights Reserved. R24.03.1</div>
<svg style="left:0;top:0" width="1600" height="900"><polyline points="1117.6,807 1121.3,810.8 1125,807" fill="none" stroke="#999" stroke-width="1"/><line x1="1271.5" y1="799.5" x2="1271.5" y2="809.3" stroke="#c4c4c4" stroke-width="1.3"/><polyline points="1280.5,799.5 1275.5,804.4 1280.5,809.3" fill="none" stroke="#c4c4c4" stroke-width="1.3"/><polyline points="1306,799.5 1301,804.4 1306,809.3" fill="none" stroke="#c4c4c4" stroke-width="1.3"/><polyline points="1390,799.5 1395.5,804.4 1390,809.3" fill="none" stroke="#555" stroke-width="1.3"/><polyline points="1415.8,799.5 1421,804.4 1415.8,809.3" fill="none" stroke="#555" stroke-width="1.3"/><line x1="1424.5" y1="799.5" x2="1424.5" y2="809.3" stroke="#555" stroke-width="1.3"/></svg>
</div></div></body></html>
